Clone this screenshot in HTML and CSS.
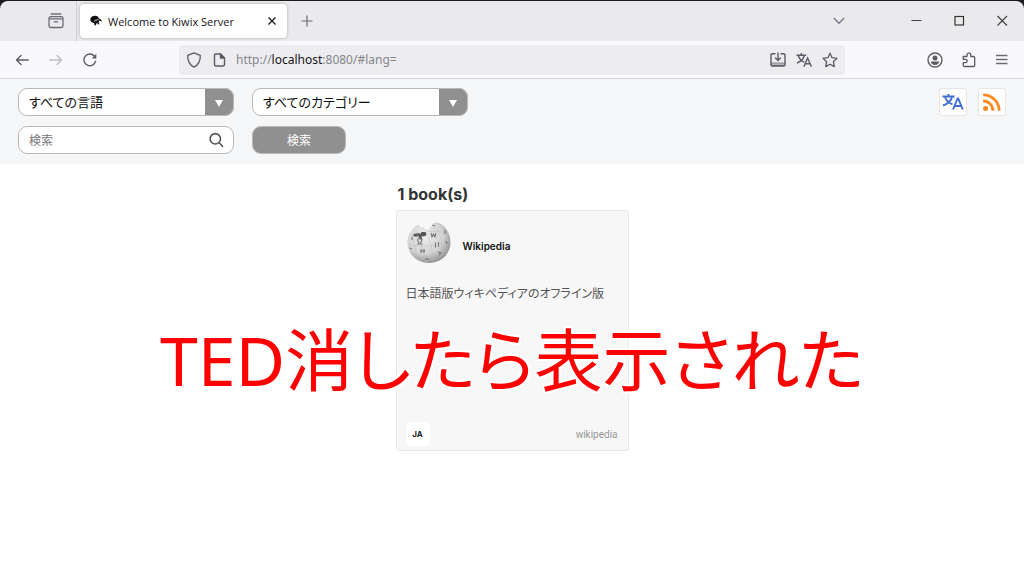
FILE: index.html
```html
<!DOCTYPE html>
<html lang="ja">
<head>
  <meta charset="UTF-8" />
  <meta name="viewport" content="width=device-width, initial-scale=1.0"/>
  <title>Welcome to Kiwix Server</title>
  <link rel="stylesheet" href="styles.css">
</head>
<body>
  <div class="window-edge">
    <div class="tab-bar">
      <button class="icon-button tab-overview" aria-label="Tab overview">
        <svg width="16" height="16" viewBox="0 0 16 16" fill="none" stroke="#6b6b76" stroke-width="1.3" stroke-linecap="round" stroke-linejoin="round">
          <path d="M3.200 1h9.600M2.700 3.700h10.600a1.700 1.700 0 0 1 1.700 1.700v7.400a1.700 1.700 0 0 1-1.700 1.700H2.700A1.700 1.700 0 0 1 1 12.800V5.400a1.700 1.700 0 0 1 1.700-1.700zM1 5.800h14M6.300 8.800h3.400"/>
        </svg>
      </button>
      <div class="tab">
        <svg class="favicon" width="14" height="14" viewBox="0 0 14 14">
          <path fill="#111" d="M5 2C7.500 1.300 9.500 2.500 9.800 4.500c1.700.2 2.800 1.300 3.200 3.500-1-1.300-2-1.600-3-1.200L9.700 9l1.300 1.300H9L8.300 9.300 7 9.500l.3 1.800H4.900l.7-.9-.7-1.500C2.500 8.500 1.200 7.300 1.300 5.400 1.200 3.500 3 2 5 2z"/>
          <path fill="none" stroke="#fff" stroke-width=".9" d="M5.500 7.500c.3-1.300 1.500-1.600 2.500-1.300"/>
          <circle cx="9" cy="5.600" r=".7" fill="#fff"/>
        </svg>
        <span class="tab-title">Welcome to Kiwix Server</span>
        <button class="icon-button" aria-label="Close tab">
          <svg width="10" height="10" viewBox="0 0 10 10" stroke="#222" stroke-width="1.4"><path d="M1.500 1.500l7 7M8.500 1.500l-7 7"/></svg>
        </button>
      </div>
      <button class="icon-button new-tab" aria-label="New tab">
        <svg width="12" height="12" viewBox="0 0 12 12" stroke="#6b6b76" stroke-width="1.2"><path d="M6 .5v11M.5 6h11"/></svg>
      </button>
      <div class="window-buttons">
        <button class="icon-button list-tabs" aria-label="List all tabs">
          <svg width="12" height="12" viewBox="0 0 12 12" fill="none" stroke="#77778a" stroke-width="1.4"><path d="M.8 3L6 8.200 11.200 3"/></svg>
        </button>
        <button class="icon-button" aria-label="Minimize">
          <svg width="12" height="12" viewBox="0 0 12 12" stroke="#444" stroke-width="1"><path d="M1.500 5.500h10"/></svg>
        </button>
        <button class="icon-button" aria-label="Maximize">
          <svg width="12" height="12" viewBox="0 0 12 12" fill="none" stroke="#333" stroke-width="1.2"><rect x="2" y="1.500" width="8.500" height="8.500"/></svg>
        </button>
        <button class="icon-button" aria-label="Close">
          <svg width="12" height="12" viewBox="0 0 12 12" stroke="#444" stroke-width="1.2"><path d="M1.500 1l9.500 9.500M11 1L1.500 10.500"/></svg>
        </button>
      </div>
    </div>
  </div>

  <div class="nav-bar">
    <div class="nav-buttons">
      <button class="icon-button" aria-label="Back">
        <svg width="14" height="14" viewBox="0 0 14 14" fill="none" stroke="#5b5b66" stroke-width="1.4" stroke-linecap="round" stroke-linejoin="round"><path d="M13.200 7H1.500M6 2.500L1.500 7 6 11.500"/></svg>
      </button>
      <button class="icon-button" aria-label="Forward" disabled>
        <svg width="14" height="14" viewBox="0 0 14 14" fill="none" stroke="#bdbdc3" stroke-width="1.4" stroke-linecap="round" stroke-linejoin="round"><path d="M.8 7h11.700M8 2.500L12.500 7 8 11.500"/></svg>
      </button>
      <button class="icon-button" aria-label="Reload">
        <svg width="14" height="14" viewBox="0 0 14 14" fill="none" stroke="#5b5b66" stroke-width="1.4" stroke-linecap="round"><path d="M12.600 8.200A5.900 5.900 0 1 1 11.300 3L12.500 4.500"/><path d="M13.300.8v4.600H8.700z" fill="#5b5b66" stroke="none"/></svg>
      </button>
    </div>
    <div class="url-bar">
      <svg width="16" height="16" viewBox="0 0 16 16" fill="none" stroke="#5b5b66" stroke-width="1.3" stroke-linejoin="round"><path d="M8 .9l6.300 2.500c.2 5.300-1.600 9.200-6.300 11.700C3.300 12.600 1.500 8.700 1.700 3.400z"/></svg>
      <svg width="14" height="14" viewBox="0 0 14 14" fill="none" stroke="#5b5b66" stroke-width="1.4" stroke-linejoin="round"><path d="M3.500 1h5l4 4v6.500A1.500 1.500 0 0 1 11 13H4a1.500 1.500 0 0 1-1.500-1.500V2a1 1 0 0 1 1-1z"/><path d="M8.500 1v4h4z" fill="#5b5b66"/></svg>
      <a class="url" href="#lang=">http://<span class="host">localhost</span>:8080/#lang=</a>
      <button class="icon-button" aria-label="Install">
        <svg width="16" height="16" viewBox="0 0 16 16" fill="none" stroke="#5b5b66" stroke-width="1.4" stroke-linecap="round" stroke-linejoin="round"><path d="M1.500 11h13v2.500h-13z" fill="#b5b5bc" stroke="#8a8a94" stroke-width="1"/><path d="M5 1.700H2.300A1.300 1.300 0 0 0 1 3v9.700A1.300 1.300 0 0 0 2.300 14h11.400a1.300 1.300 0 0 0 1.300-1.300V3a1.300 1.300 0 0 0-1.300-1.300H11M8 1v7M5.500 6L8 8.500 10.500 6"/></svg>
      </button>
      <button class="icon-button" aria-label="Translate page">
        <svg width="16" height="16" viewBox="0 0 16 16" fill="none" stroke="#5b5b66" stroke-width="1.4"><path d="M.5 3.200h9.700M5.300 1v2.200M2.300 3.500c.8 3.200 3 5.500 6 6.700M8.300 3.500C7.500 7 5 9.500 1 11M7.800 14.800L11.600 6l3.800 8.800M9.100 11.800h5"/></svg>
      </button>
      <button class="icon-button" aria-label="Bookmark">
        <svg width="16" height="16" viewBox="0 0 16 16" fill="none" stroke="#5b5b66" stroke-width="1.3" stroke-linejoin="round"><path d="M8 1.200l2.100 4.500 4.900.6-3.600 3.400.9 4.900L8 12.200l-4.300 2.400.9-4.900L1 6.300l4.900-.6z"/></svg>
      </button>
    </div>
    <div class="toolbar">
      <button class="icon-button" aria-label="Account">
        <svg width="16" height="16" viewBox="0 0 16 16"><circle cx="8" cy="8" r="7" fill="none" stroke="#5b5b66" stroke-width="1.4"/><circle cx="8" cy="6" r="2.500" fill="#5b5b66"/><path d="M3.800 9.500h8.400c-.3 2.200-1.800 3.500-4.200 3.500s-3.900-1.300-4.200-3.500z" fill="#5b5b66"/></svg>
      </button>
      <button class="icon-button" aria-label="Extensions">
        <svg width="16" height="16" viewBox="0 0 16 16" fill="none" stroke="#5b5b66" stroke-width="1.3" stroke-linejoin="round"><path d="M6 4.500V3a1.900 1.900 0 0 1 3.800 0v1.500h2.700A1.200 1.200 0 0 1 13.700 5.700v7.600a1.200 1.200 0 0 1-1.200 1.200H3.400a1.200 1.200 0 0 1-1.200-1.200v-2.600h2.300a1.700 1.700 0 0 0 0-3.400H2.200V4.500z"/></svg>
      </button>
      <button class="icon-button" aria-label="Menu">
        <svg width="14" height="14" viewBox="0 0 14 14" stroke="#6b6b76" stroke-width="1.3"><path d="M1 2.500h11.500M1 6.500h11.500M1 10.500h11.500"/></svg>
      </button>
    </div>
  </div>

  <header class="kiwix-nav">
    <form class="filters">
      <div class="select-wrap">
        <select aria-label="言語"><option>すべての言語</option></select>
        <span class="arrow"></span>
      </div>
      <div class="select-wrap">
        <select aria-label="カテゴリー"><option>すべてのカテゴリー</option></select>
        <span class="arrow"></span>
      </div>
      <div class="search-wrap">
        <input type="text" placeholder="検索" aria-label="検索" />
        <svg width="16" height="16" viewBox="0 0 16 16" fill="none" stroke="#555" stroke-width="1.6" stroke-linecap="round"><circle cx="7.300" cy="6.800" r="5.200"/><path d="M11.200 10.800l3.300 3.500"/></svg>
      </div>
      <button class="search-button" type="button">検索</button>
    </form>
    <div class="links">
      <button class="tile" aria-label="UI language">
        <svg width="22" height="20" viewBox="0 0 22 20" fill="none" stroke="#3f6fd1" stroke-width="1.9"><path d="M.5 4.500h12M6.500 2v2.500M3 5c1.300 4 4 6 7.500 7.500M10 5C9 9 6.500 11.500 1 13.500M11 17.500L15.600 6.500h.6l4.600 11M12.500 14h6.800"/></svg>
      </button>
      <a class="tile" href="#feed" aria-label="RSS feed">
        <svg width="20" height="20" viewBox="0 0 20 20" fill="none" stroke="#f98a21" stroke-width="2.800"><circle cx="3.600" cy="16.400" r="2.500" fill="#f98a21" stroke="none"/><path d="M1.200 9a9.800 9.800 0 0 1 9.800 9.800M1.200 2.800a16 16 0 0 1 16 16"/></svg>
      </a>
    </div>
  </header>

  <main class="results">
    <h1>1 book(s)</h1>
    <article class="book">
      <div class="book-head">
        <svg width="44" height="44" viewBox="0 0 44 44">
          <defs>
            <radialGradient id="globe" cx=".4" cy=".35" r=".7">
              <stop offset="0" stop-color="#ececec"/>
              <stop offset=".6" stop-color="#d4d4d4"/>
              <stop offset="1" stop-color="#8a8a8a"/>
            </radialGradient>
          </defs>
          <path fill="url(#globe)" d="M11.500 3.500l2 3 3-.5 2 3 4-.5.500-3 4-.5-.5-3 4-.5C38.500 4 43.500 12 43.500 21.500 43.500 33 34 42 22 42S.5 33 .5 21.500C.5 13.500 5 6.500 11.500 3.500z"/>
          <path fill="#555" d="M6.500 13l5-1 2 1 1-2h4l1 2-1 2-4 .5 1 3h-3l-1-3h-5z"/>
          <path fill="none" stroke="#bbb" stroke-width=".5" d="M3 13c5 3 4 16 8 24M9 10c5 9 6 21 11 31M19 12c4 6 7 17 7 29M28 6c6 7 8 17 6 31M2 23c12 4 28 2 41-4M5 33c10 4 25 3 36-3M20 10c7 1 15 0 20 2"/>
          <g fill="none" stroke="#777" stroke-width="1.1">
            <path d="M10 23h2v-1c-2.500-3-1-5 .800-5s3.200 2 .7 5v1h2M24 12l1 4 1.500-3 1.500 3 1-4M28.500 21.500v5M31.500 21v5M14 28v4M17 28v4M13.500 30h4.500M38 9v4M3 27l2 1M31 31l3 1-2 2M39 20l1 3M18 38h4M5 16v3M25 4l3 1"/>
          </g>
        </svg>
        <h2>Wikipedia</h2>
      </div>
      <p class="description">日本語版ウィキペディアのオフライン版</p>
      <div class="book-foot">
        <span class="lang">JA</span>
        <a class="tag" href="#wikipedia">wikipedia</a>
      </div>
    </article>
  </main>

  <p class="caption">TED消したら表示された</p>
</body>
</html>
```

FILE: styles.css
```css
* {
  box-sizing: border-box;
}

body {
  margin: 0;
  background: #fff;
  font-family: "Open Sans", "Noto Sans CJK JP", sans-serif;
}

svg {
  display: block;
  flex: none;
}

.icon-button {
  display: flex;
  padding: 0;
  border: none;
  background: none;
  cursor: pointer;
}

.window-edge {
  background: #1c1b22;
  padding-top: 1px;
}

.tab-bar {
  display: flex;
  align-items: center;
  height: 40px;
  background: #eaeaed;
  border-radius: 8px 8px 0 0;
}

.tab-overview {
  align-items: center;
  justify-content: flex-end;
  width: 77px;
  height: 40px;
  padding-right: 12px;
  border-right: 1px solid #cfcfd4;
}

.tab {
  display: flex;
  align-items: center;
  width: 207px;
  height: 34px;
  margin-left: 3px;
  padding: 0 10px 0 9px;
  background: #fff;
  border-radius: 4px;
  box-shadow: 0 0 3px rgba(0, 0, 0, 0.3);
}

.tab-title {
  flex: 1;
  margin-left: 5px;
  font-size: 11px;
  color: #15141a;
  white-space: nowrap;
}

.new-tab {
  margin-left: 14px;
}

.window-buttons {
  display: flex;
  gap: 31px;
  margin-left: auto;
  padding-right: 16px;
}

.list-tabs {
  margin-right: 34px;
}

.nav-bar {
  display: flex;
  align-items: center;
  height: 38px;
  background: #f9f9fb;
  border-bottom: 1px solid #d6d6da;
}

.nav-buttons {
  display: flex;
  gap: 20px;
  width: 179px;
  padding-left: 15px;
}

.url-bar {
  flex: 1;
  display: flex;
  align-items: center;
  gap: 10px;
  height: 30px;
  padding: 0 7px;
  background: #ededf0;
  border-radius: 4px;
}

.url {
  flex: 1;
  font-family: "Noto Sans", sans-serif;
  font-size: 12px;
  color: #85858c;
  text-decoration: none;
}

.host {
  color: #15141a;
}

.toolbar {
  display: flex;
  align-items: center;
  justify-content: flex-end;
  gap: 18px;
  width: 179px;
  padding-right: 15px;
}

.kiwix-nav {
  display: flex;
  justify-content: space-between;
  padding: 9px 18px 10px;
  background: #f4f6f8;
}

.filters {
  display: grid;
  grid-template-columns: 216px 216px;
  gap: 10px 18px;
}

.select-wrap,
.search-wrap {
  position: relative;
}

select,
input {
  display: block;
  width: 100%;
  height: 28px;
  padding: 0 10px;
  border: 1px solid #b9b9b9;
  border-radius: 9px;
  background: #fff;
  color: #111;
  font-family: inherit;
  font-size: 13px;
  font-feature-settings: "palt";
  appearance: none;
}

input {
  font-size: 12px;
}

input::placeholder {
  color: #777;
}

.arrow {
  position: absolute;
  top: 0;
  right: 0;
  display: flex;
  align-items: center;
  justify-content: center;
  width: 29px;
  height: 28px;
  padding-top: 2px;
  border: 1px solid #b9b9b9;
  border-left: none;
  background: #909090;
  border-radius: 0 9px 9px 0;
  pointer-events: none;
}

.arrow::after {
  content: "";
  border: 4px solid transparent;
  border-top: 7px solid #fff;
  border-bottom: none;
}

.search-wrap svg {
  position: absolute;
  top: 6px;
  right: 10px;
}

.search-button {
  width: 94px;
  height: 28px;
  padding: 0;
  border: 1px solid #b9b9b9;
  border-radius: 9px;
  background: #909090;
  color: #fff;
  font-family: inherit;
  font-size: 12px;
  cursor: pointer;
}

.links {
  display: flex;
  gap: 11px;
}

.tile {
  display: flex;
  align-items: center;
  justify-content: center;
  width: 28px;
  height: 28px;
  padding: 0;
  border: 1px solid #e6e6e6;
  border-radius: 3px;
  background: #fff;
}

.results {
  width: 233px;
  margin: 0 auto;
  padding-top: 18px;
}

h1 {
  margin: 0 0 4px 2px;
  color: #333;
  font-family: Inter, sans-serif;
  font-size: 16px;
  line-height: 24px;
}

.book {
  display: flex;
  flex-direction: column;
  min-height: 241px;
  padding: 10px 10px 4px 9px;
  border: 1px solid #e8e8e8;
  border-radius: 3px;
  background: #f7f7f7;
}

.book-head {
  display: flex;
  align-items: center;
  gap: 12px;
  padding-left: 1px;
}

h2 {
  margin: 6px 0 0;
  color: #111;
  font-family: Inter, sans-serif;
  font-size: 10px;
  font-weight: 600;
}

.description {
  margin: 19px 0 0;
  color: #555;
  font-size: 12px;
  line-height: 20px;
  font-feature-settings: "palt";
  white-space: nowrap;
}

.book-foot {
  display: flex;
  align-items: center;
  justify-content: space-between;
  margin-top: auto;
}

.lang {
  width: 24px;
  border-radius: 3px;
  background: #fff;
  color: #222;
  font-family: Inter, sans-serif;
  font-size: 8px;
  font-weight: 700;
  line-height: 24px;
  text-align: center;
}

.tag {
  color: #999;
  font-family: Roboto, sans-serif;
  font-size: 10px;
  text-decoration: none;
}

/* Subtitle over the whole window */
.caption {
  position: absolute;
  top: 310px;
  left: 0;
  width: 100%;
  margin: 0;
  color: #f00;
  font-family: "Noto Sans", "Noto Sans CJK JP", sans-serif;
  font-size: 68px;
  font-weight: 400;
  font-feature-settings: "palt";
  line-height: 100px;
  text-align: center;
  white-space: nowrap;
  text-shadow: 0 0 3px #fff, 2px 2px 1px #fff, -2px -2px 1px #fff, 2px -2px 1px #fff, -2px 2px 1px #fff;
}
```
